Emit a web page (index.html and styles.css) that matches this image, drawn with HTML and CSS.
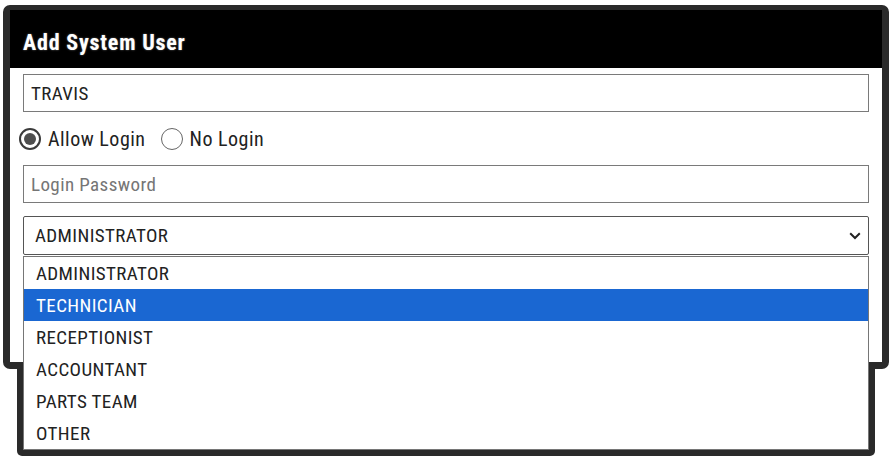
FILE: index.html
```html
<!DOCTYPE html>
<html>
<head>
<meta charset="utf-8">
<link rel="stylesheet" href="styles.css">
</head>
<body>
<div class="stage">
  <div class="dialog">
    <div class="dialog-head"><h1 class="title">Add System User</h1></div>
    <div class="dialog-body">
      <div class="field"><span class="value">TRAVIS</span></div>
      <div class="radio-row">
        <label class="radio"><span class="radio-dot checked"></span><span class="radio-label">Allow Login</span></label>
        <label class="radio"><span class="radio-dot"></span><span class="radio-label">No Login</span></label>
      </div>
      <div class="field"><span class="placeholder">Login Password</span></div>
      <div class="select">
        <span class="value">ADMINISTRATOR</span>
        <svg class="chevron" width="12" height="8" viewBox="0 0 12 8"><path d="M1.2 1.3 L6 6 L10.8 1.3" fill="none" stroke="#222" stroke-width="2"/></svg>
      </div>
    </div>
  </div>
  <div class="popup-frame"></div>
  <ul class="popup-list">
    <li class="option">ADMINISTRATOR</li>
    <li class="option selected">TECHNICIAN</li>
    <li class="option">RECEPTIONIST</li>
    <li class="option">ACCOUNTANT</li>
    <li class="option">PARTS TEAM</li>
    <li class="option">OTHER</li>
  </ul>
</div>
</body>
</html>
```
FILE: styles.css
```css
html, body {
  margin: 0;
  padding: 0;
  background: #fff;
}
body {
  font-family: "Roboto Condensed", Roboto, "Liberation Sans", sans-serif;
  color: #222;
}
.stage {
  position: relative;
  width: 895px;
  height: 474px;
  padding: 5px 0 0 3px;
  box-sizing: border-box;
}
.dialog {
  position: relative;
  z-index: 2;
  width: 886px;
  box-sizing: border-box;
  border: 7px solid #2a2a2a;
  border-top-width: 5px;
  border-radius: 7px;
  background: #fff;
  overflow: hidden;
}
.dialog-head {
  background: #000;
  height: 58px;
  display: flex;
  align-items: center;
  padding-left: 13px;
}
.title {
  margin: 0;
  color: #fff;
  font-size: 22px;
  font-weight: 700;
  letter-spacing: 0.8px;
  text-shadow: 0 0 2px rgba(255,255,255,0.45);
  padding-top: 6px;
}
.dialog-body {
  padding: 6px 13px 0 13px;
  height: 294px;
  box-sizing: border-box;
}
.field {
  height: 38px;
  box-sizing: border-box;
  border: 1px solid #7a7a7a;
  display: flex;
  align-items: center;
  padding-left: 7px;
  font-size: 19px;
  letter-spacing: 0.4px;
}
.value { color: #222; }
.placeholder { color: #757575; }
.radio-row {
  height: 53px;
  display: flex;
  align-items: center;
  gap: 15px;
  margin-left: -4px;
}
.radio {
  display: flex;
  align-items: center;
  gap: 7px;
  font-size: 20px;
  letter-spacing: 0.5px;
  color: #222;
}
.radio-dot {
  width: 22px;
  height: 22px;
  box-sizing: border-box;
  border-radius: 50%;
  border: 1.5px solid #666;
  background: #fff;
  position: relative;
}
.radio-dot.checked {
  border: 2px solid #3b3b3b;
}
.radio-dot.checked::after {
  content: "";
  position: absolute;
  left: 3px;
  top: 3px;
  width: 12px;
  height: 12px;
  border-radius: 50%;
  background: #4e4e4e;
}
.select {
  margin-top: 13px;
  height: 39px;
  box-sizing: border-box;
  border: 1px solid #555;
  border-radius: 2px;
  display: flex;
  align-items: center;
  justify-content: space-between;
  padding: 0 7px 0 11px;
  font-size: 19px;
  letter-spacing: 0.4px;
}
.chevron { display: block; margin-top: 1px; }
.popup-frame {
  position: absolute;
  z-index: 1;
  left: 17px;
  top: 250px;
  width: 858px;
  height: 206px;
  background: #2a2a2a;
  border-radius: 5px;
}
.popup-list {
  position: absolute;
  z-index: 3;
  left: 23px;
  top: 256px;
  width: 846px;
  box-sizing: border-box;
  margin: 0;
  padding: 0;
  list-style: none;
  background: #fff;
  border: 1px solid #767676;
}
.option {
  height: 32px;
  display: flex;
  align-items: center;
  padding-left: 12px;
  font-size: 19px;
  letter-spacing: 0.4px;
  color: #222;
}
.option.selected {
  background: #1a67d2;
  color: #fff;
}
```
